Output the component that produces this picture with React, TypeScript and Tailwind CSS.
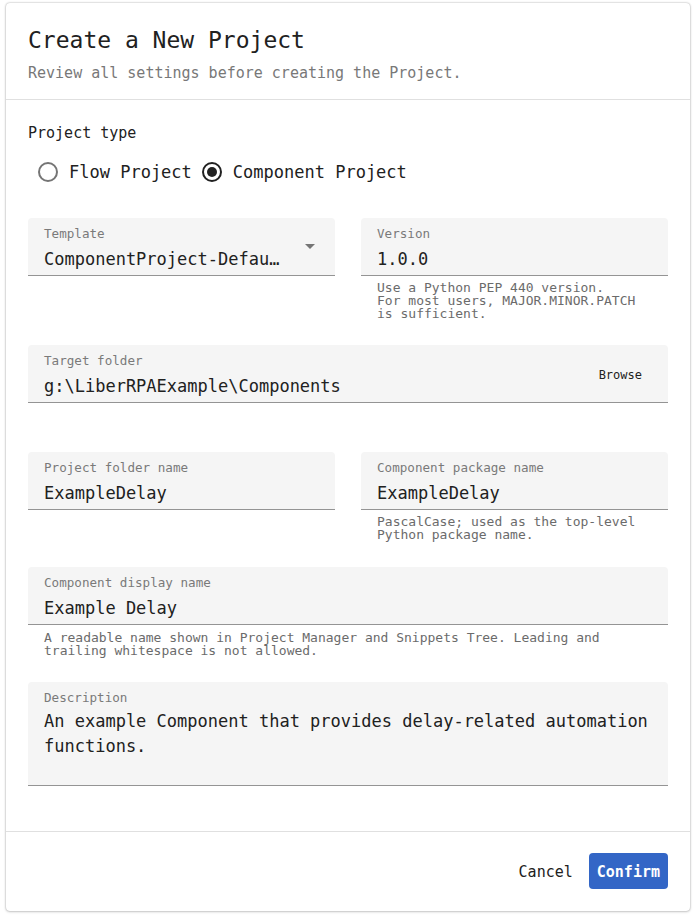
import React from "react";

function Field(props: {
  label: string;
  value: string;
  right?: React.ReactNode;
  className?: string;
}) {
  return (
    <div
      className={
        "flex h-[58px] rounded-t-[4px] border-b border-[#949494] bg-[#f5f5f5] pl-4 " +
        (props.className ?? "pr-4")
      }
    >
      <div className="min-w-0 flex-1 pt-[8px]">
        <div className="text-[12.6px] leading-[16px] text-[#7a7a7a]">
          {props.label}
        </div>
        <div className="mt-[7px] truncate text-[17px] leading-[20px] text-[#212121]">
          {props.value}
        </div>
      </div>
      {props.right}
    </div>
  );
}

function Helper(props: { children: React.ReactNode; className?: string }) {
  return (
    <p
      className={
        "px-4 text-[13px] leading-[13px] text-[#6b6b6b] " +
        (props.className ?? "mt-[5px]")
      }
    >
      {props.children}
    </p>
  );
}

function Radio(props: { label: string; checked: boolean }) {
  return (
    <label className="flex h-[42px] items-center">
      <span className="flex h-[40px] w-[40px] items-center justify-center">
        <span
          data-checked={props.checked}
          className="flex h-[20px] w-[20px] items-center justify-center rounded-full border-2 border-[#757575] data-[checked=true]:border-[#212121]"
        >
          {props.checked ? (
            <span className="h-[10px] w-[10px] rounded-full bg-[#212121]" />
          ) : null}
        </span>
      </span>
      <span className="ml-[1px] text-[17px] leading-[20px] text-[#212121]">
        {props.label}
      </span>
    </label>
  );
}

export default function App() {
  return (
    <div className="min-h-[917px] bg-white pt-[3px] font-['DejaVu_Sans_Mono',monospace]">
      <div className="ml-[6px] w-[684px] rounded-[4px] bg-white shadow-[0_0_2px_rgba(0,0,0,0.35),0_1px_3px_rgba(0,0,0,0.15)]">
        <header className="border-b border-[#e0e0e0] px-[22px] pb-[16px] pt-[21px]">
          <h1 className="text-[23px] leading-[32px] text-[#212121]">
            Create a New Project
          </h1>
          <p className="mt-[7px] text-[15px] leading-[20px] text-[#787878]">
            Review all settings before creating the Project.
          </p>
        </header>

        <div className="px-[22px] pb-[45px] pt-[23px]">
          <div className="text-[15px] leading-[20px] text-[#212121]">
            Project type
          </div>
          <div className="mt-[8px] flex">
            <Radio label="Flow Project" checked={false} />
            <Radio label="Component Project" checked={true} />
          </div>

          <div className="mt-[25px] grid grid-cols-2 gap-x-[26px]">
            <Field
              label="Template"
              value="ComponentProject-Default Template"
              className="pr-[20px]"
              right={
                <div className="ml-[21px] flex items-center">
                  <svg width="10" height="5" viewBox="0 0 10 5">
                    <path d="M0 0 L10 0 L5 5 Z" fill="#757575" />
                  </svg>
                </div>
              }
            />
            <div>
              <Field label="Version" value="1.0.0" />
              <Helper>
                Use a Python PEP 440 version.
                <br />
                For most users, MAJOR.MINOR.PATCH
                <br />
                is sufficient.
              </Helper>
            </div>
          </div>

          <div className="mt-[25px]">
            <Field
              label="Target folder"
              value="g:\LiberRPAExample\Components"
              className="pr-[18px]"
              right={
                <div className="flex items-center pt-[2px]">
                  <button className="px-[8px] py-[4px] text-[12px] font-medium leading-[16px] text-[#212121]">
                    Browse
                  </button>
                </div>
              }
            />
          </div>

          <div className="mt-[49px] grid grid-cols-2 gap-x-[26px]">
            <Field label="Project folder name" value="ExampleDelay" />
            <div>
              <Field label="Component package name" value="ExampleDelay" />
              <Helper>
                PascalCase; used as the top-level
                <br />
                Python package name.
              </Helper>
            </div>
          </div>

          <div className="mt-[26px]">
            <Field label="Component display name" value="Example Delay" />
            <Helper className="mt-[6px]">
              A readable name shown in Project Manager and Snippets Tree. Leading and
              <br />
              trailing whitespace is not allowed.
            </Helper>
          </div>

          <div className="mt-[25px] h-[104px] rounded-t-[4px] border-b border-[#949494] bg-[#f5f5f5] px-4 pt-[8px]">
            <div className="text-[12.6px] leading-[16px] text-[#7a7a7a]">
              Description
            </div>
            <div className="mt-[3px] text-[17px] leading-[25px] text-[#212121]">
              An example Component that provides delay-related automation functions.
            </div>
          </div>
        </div>

        <footer className="flex justify-end gap-[8px] border-t border-[#e0e0e0] pb-[22px] pr-[22px] pt-[21px]">
          <button className="h-[36px] rounded-[4px] px-[8px] pt-[3px] text-[15px] text-[#212121]">
            Cancel
          </button>
          <button className="h-[36px] rounded-[4px] bg-[#3366c6] px-[8px] pt-[3px] text-[15px] font-bold text-white">
            Confirm
          </button>
        </footer>
      </div>
    </div>
  );
}
